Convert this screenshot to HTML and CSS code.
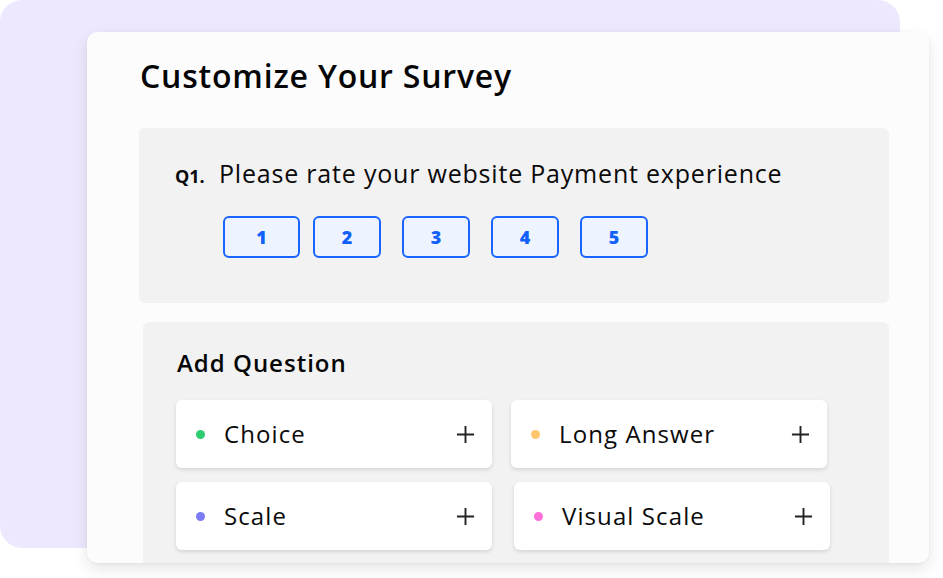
FILE: index.html
```html
<!DOCTYPE html>
<html>
<head>
<meta charset="utf-8">
<link rel="stylesheet" href="styles.css">
</head>
<body>
<div class="stage">
  <div class="card">
    <h1 class="title">Customize Your Survey</h1>
    <section class="qbox">
      <div class="qline"><span class="qnum">Q1.</span><span class="qtext">Please rate your website Payment experience</span></div>
      <div class="scale">
        <button class="rate rate-wide">1</button>
        <button class="rate rate-tight">2</button>
        <button class="rate">3</button>
        <button class="rate">4</button>
        <button class="rate">5</button>
      </div>
    </section>
    <section class="addbox">
      <h2 class="addtitle">Add Question</h2>
      <div class="optrow">
        <div class="opt"><span class="dot dot-green"></span><span class="optlabel">Choice</span><svg class="plus" viewBox="0 0 20 20"><path d="M10 1v18M1 10h18"/></svg></div>
        <div class="opt"><span class="dot dot-orange"></span><span class="optlabel">Long Answer</span><svg class="plus" viewBox="0 0 20 20"><path d="M10 1v18M1 10h18"/></svg></div>
      </div>
      <div class="optrow optrow-2">
        <div class="opt"><span class="dot dot-purple"></span><span class="optlabel">Scale</span><svg class="plus" viewBox="0 0 20 20"><path d="M10 1v18M1 10h18"/></svg></div>
        <div class="opt"><span class="dot dot-pink"></span><span class="optlabel">Visual Scale</span><svg class="plus" viewBox="0 0 20 20"><path d="M10 1v18M1 10h18"/></svg></div>
      </div>
    </section>
  </div>
</div>
</body>
</html>
```

FILE: styles.css
```css
* { box-sizing: border-box; }
html, body { margin: 0; padding: 0; background: #ffffff; }
body { font-family: "Open Sans", "Liberation Sans", sans-serif; color: #111; }

.stage {
  position: relative;
  width: 943px;
  height: 578px;
  padding: 32px 0 0 87px;
  overflow: hidden;
}
.stage::before {
  content: "";
  position: absolute;
  left: 0; top: 0;
  width: 900px; height: 548px;
  background: #ede8fd;
  border-radius: 22px;
}

.card {
  position: relative;
  width: 842px;
  height: 531px;
  background: #fcfcfc;
  border-radius: 10px;
  box-shadow: 0 6px 16px rgba(0,0,0,0.10), 0 1px 3px rgba(0,0,0,0.05);
  overflow: hidden;
  padding: 0 0 0 52px;
}

.title {
  margin: 0;
  padding-top: 24px;
  height: 96px;
  font-size: 32px;
  font-weight: 650;
  letter-spacing: 0.8px;
  line-height: 40px;
  color: #050505;
  padding-left: 1px;
}

.qbox {
  width: 750px;
  height: 175px;
  background: #f2f2f2;
  border-radius: 6px;
  padding: 29px 0 0 36px;
}
.qline {
  display: flex;
  align-items: baseline;
  height: 32px;
  line-height: 32px;
}
.qnum { font-size: 18px; font-weight: 700; width: 44px; color: #0a0a0a; }
.qtext { font-size: 25px; font-weight: 450; letter-spacing: 0.8px; color: #0a0a0a; }

.scale {
  display: flex;
  gap: 21px;
  margin-top: 27px;
  padding-left: 48px;
}
.rate {
  width: 68px;
  height: 42px;
  border: 2px solid #1a64ff;
  background: #eef4ff;
  border-radius: 6px;
  color: #1060fa;
  font-family: inherit;
  font-size: 18px;
  font-weight: 800;
  padding: 0;
}
.rate-wide { width: 77px; }
.rate-tight { margin-left: -8px; }

.addbox {
  width: 746px;
  height: 260px;
  margin: 19px 0 0 4px;
  background: #f2f2f2;
  border-radius: 6px;
  padding: 24px 0 0 33px;
}
.addtitle {
  margin: 0;
  height: 54px;
  font-size: 24px;
  font-weight: 650;
  letter-spacing: 1px;
  line-height: 34px;
  padding-left: 1px;
  color: #050505;
}
.optrow { display: flex; gap: 19px; }
.optrow-2 { gap: 22px; margin-top: 14px; }
.opt {
  width: 316px;
  height: 68px;
  background: #ffffff;
  border-radius: 6px;
  box-shadow: 0 2px 4px rgba(0,0,0,0.12);
  display: flex;
  align-items: center;
  padding: 0 17px 0 20px;
}
.dot { width: 9px; height: 9px; border-radius: 50%; flex: none; }
.dot-green { background: #2ecc71; }
.dot-orange { background: #ffc46e; }
.dot-purple { background: #7b7bf6; }
.dot-pink { background: #ff6fd9; }
.optlabel { font-size: 24px; font-weight: 450; letter-spacing: 1.1px; margin-left: 19px; flex: 1; color: #0a0a0a; line-height: 30px; }
.plus { width: 19px; height: 19px; fill: none; stroke: #222; stroke-width: 2; }
```
